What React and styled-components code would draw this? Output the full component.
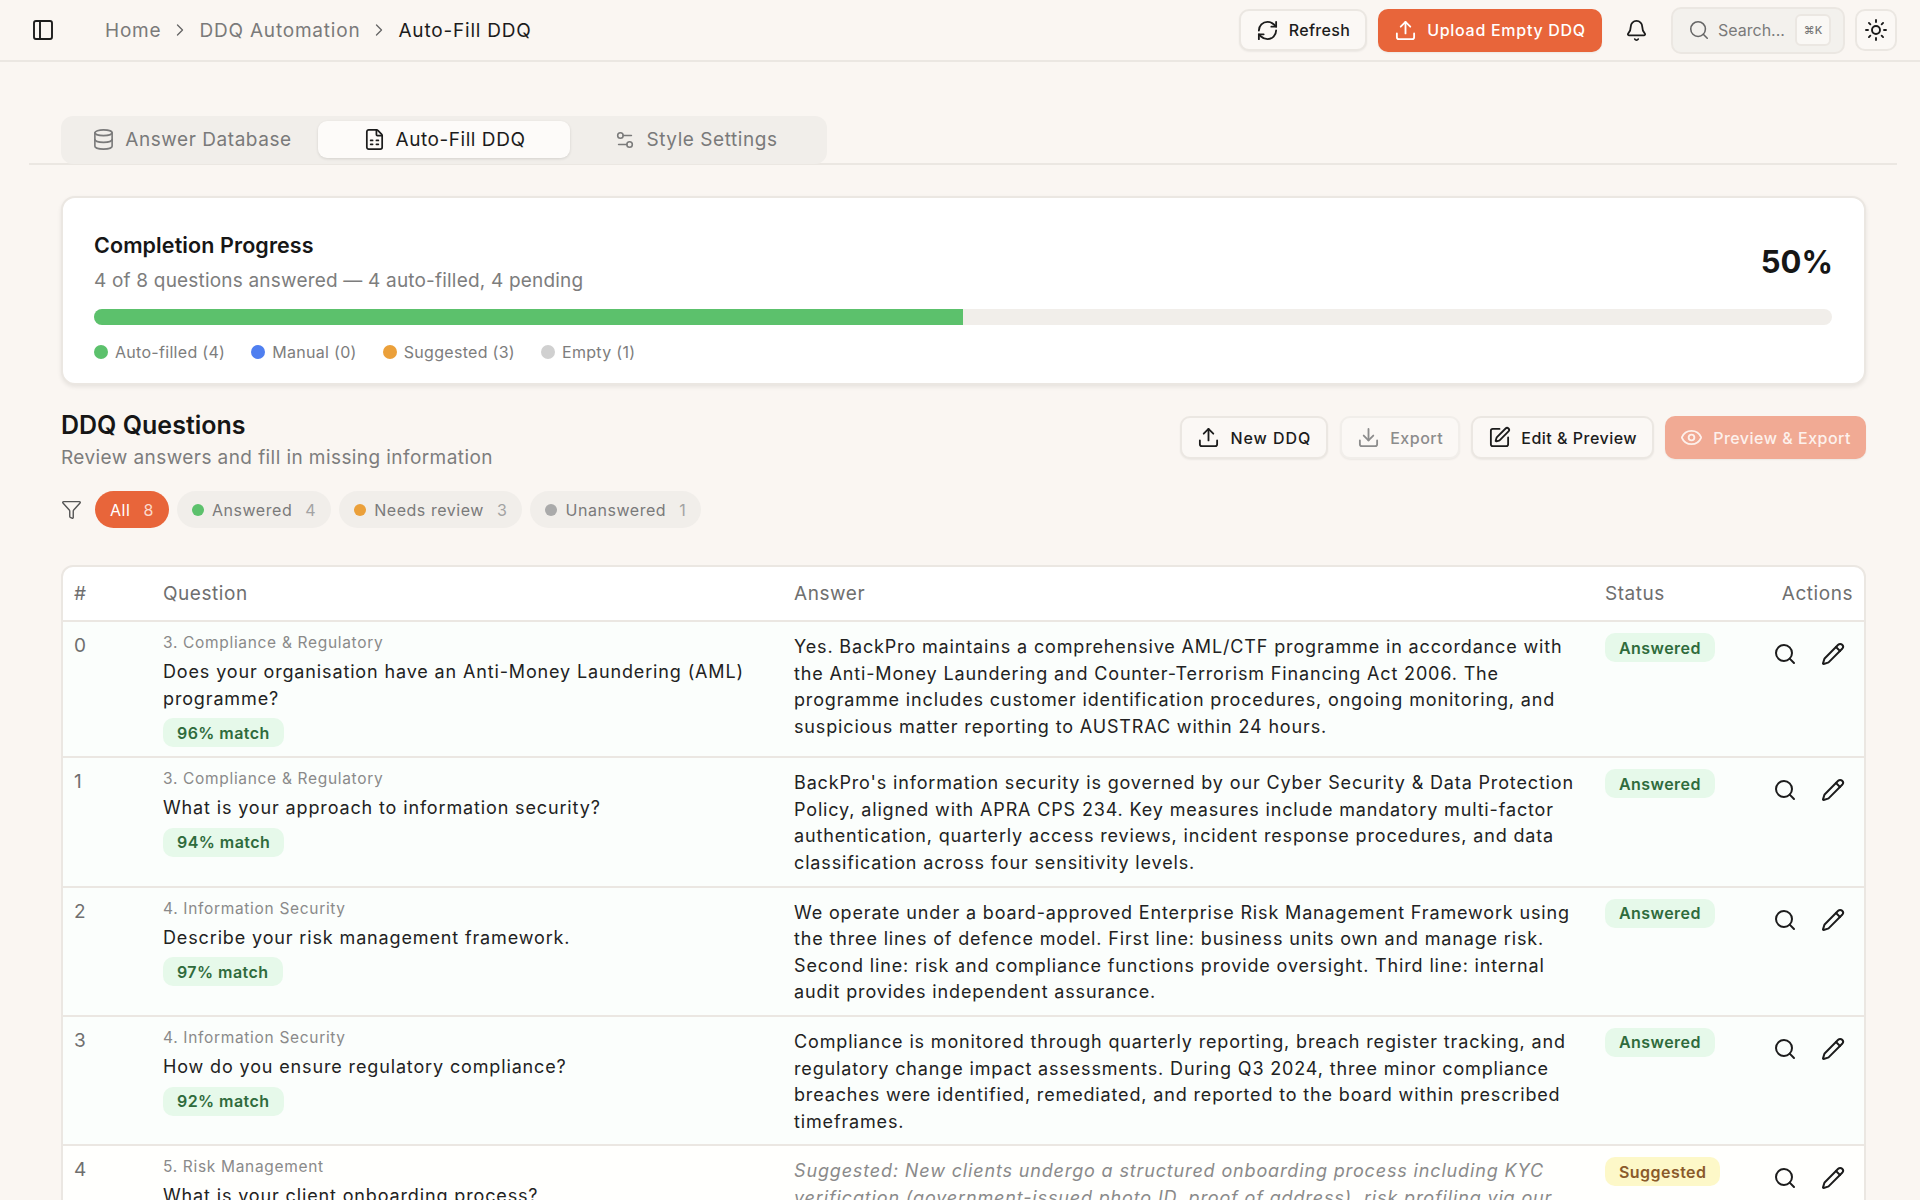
import React from "react"
import styled, { createGlobalStyle } from "styled-components"
import {
  PanelLeft,
  ChevronRight,
  RefreshCw,
  Upload,
  Bell,
  Search,
  Sun,
  Database,
  FileSpreadsheet,
  Settings2,
  Funnel,
  Download,
  SquarePen,
  Eye,
  Pencil,
} from "lucide-react"

const GlobalStyle = createGlobalStyle`
  html, body {
    margin: 0;
    height: 100%;
    overflow: hidden;
    background: #faf6f2;
    font-family: Inter, "Liberation Sans", sans-serif;
    color: #1c1c1c;
  }
  * { box-sizing: border-box; }
`

const rows = [
  {
    id: 0,
    cat: "3. Compliance & Regulatory",
    q: "Does your organisation have an Anti-Money Laundering (AML) programme?",
    match: "96% match",
    a: "Yes. BackPro maintains a comprehensive AML/CTF programme in accordance with the Anti-Money Laundering and Counter-Terrorism Financing Act 2006. The programme includes customer identification procedures, ongoing monitoring, and suspicious matter reporting to AUSTRAC within 24 hours.",
    status: "Answered",
  },
  {
    id: 1,
    cat: "3. Compliance & Regulatory",
    q: "What is your approach to information security?",
    match: "94% match",
    a: "BackPro's information security is governed by our Cyber Security & Data Protection Policy, aligned with APRA CPS 234. Key measures include mandatory multi-factor authentication, quarterly access reviews, incident response procedures, and data classification across four sensitivity levels.",
    status: "Answered",
  },
  {
    id: 2,
    cat: "4. Information Security",
    q: "Describe your risk management framework.",
    match: "97% match",
    a: "We operate under a board-approved Enterprise Risk Management Framework using the three lines of defence model. First line: business units own and manage risk. Second line: risk and compliance functions provide oversight. Third line: internal audit provides independent assurance.",
    status: "Answered",
  },
  {
    id: 3,
    cat: "4. Information Security",
    q: "How do you ensure regulatory compliance?",
    match: "92% match",
    a: "Compliance is monitored through quarterly reporting, breach register tracking, and regulatory change impact assessments. During Q3 2024, three minor compliance breaches were identified, remediated, and reported to the board within prescribed timeframes.",
    status: "Answered",
  },
  {
    id: 4,
    cat: "5. Risk Management",
    q: "What is your client onboarding process?",
    match: "78% match",
    a: "Suggested: New clients undergo a structured onboarding process including KYC verification (government-issued photo ID, proof of address), risk profiling via our standard questionnaire, and a suitability assessment before any advice is provided.",
    status: "Suggested",
  },
]

const legend = [
  { label: "Auto-filled (4)", color: "#5cc16c" },
  { label: "Manual (0)", color: "#4f7ff0" },
  { label: "Suggested (3)", color: "#eba03a" },
  { label: "Empty (1)", color: "#d0d0d0" },
]

const filters = [
  { label: "Answered", count: 4, color: "#5cc16c" },
  { label: "Needs review", count: 3, color: "#eba03a" },
  { label: "Unanswered", count: 1, color: "#aaaaaa" },
]

const App = () => {
  return (
    <Page>
      <GlobalStyle />
      <TopBar>
        <SidebarToggle>
          <PanelLeft size={24} strokeWidth={1.9} />
        </SidebarToggle>
        <Crumbs>
          <Crumb>Home</Crumb>
          <ChevronRight size={20} strokeWidth={1.6} color="#666" />
          <Crumb>DDQ Automation</Crumb>
          <ChevronRight size={20} strokeWidth={1.6} color="#666" />
          <Crumb $current>Auto-Fill DDQ</Crumb>
        </Crumbs>
        <TopActions>
          <TopButton>
            <RefreshCw size={23} strokeWidth={1.9} />
            Refresh
          </TopButton>
          <PrimaryButton>
            <Upload size={23} strokeWidth={1.9} />
            Upload Empty DDQ
          </PrimaryButton>
          <BellButton>
            <Bell size={23} strokeWidth={1.9} />
          </BellButton>
          <SearchBox>
            <Search size={22} strokeWidth={1.7} color="#666" />
            <SearchText>Search...</SearchText>
            <Kbd>⌘K</Kbd>
          </SearchBox>
          <ThemeButton>
            <Sun size={24} strokeWidth={1.9} />
          </ThemeButton>
        </TopActions>
      </TopBar>

      <Main>
        <TabRow>
          <Tabs>
            <Tab>
              <Database size={23} strokeWidth={1.7} />
              Answer Database
            </Tab>
            <Tab $active>
              <FileSpreadsheet size={23} strokeWidth={1.8} />
              Auto-Fill DDQ
            </Tab>
            <Tab>
              <Settings2 size={22} strokeWidth={1.7} />
              Style Settings
            </Tab>
          </Tabs>
        </TabRow>

        <Content>
          <ProgressCard>
            <ProgressTop>
              <div>
                <CardTitle>Completion Progress</CardTitle>
                <CardSub>4 of 8 questions answered — 4 auto-filled, 4 pending</CardSub>
              </div>
              <Percent>50%</Percent>
            </ProgressTop>
            <Track>
              <Fill style={{ width: "50%" }} />
            </Track>
            <Legend>
              {legend.map((l) => (
                <LegendItem key={l.label}>
                  <Dot $color={l.color} $size={14} />
                  {l.label}
                </LegendItem>
              ))}
            </Legend>
          </ProgressCard>

          <SectionHead>
            <div>
              <SectionTitle>DDQ Questions</SectionTitle>
              <SectionSub>Review answers and fill in missing information</SectionSub>
            </div>
            <SectionActions>
              <NewButton>
                <Upload size={23} strokeWidth={1.9} />
                New DDQ
              </NewButton>
              <OutlineButton $disabled>
                <Download size={23} strokeWidth={1.9} />
                Export
              </OutlineButton>
              <OutlineButton>
                <SquarePen size={23} strokeWidth={1.9} />
                Edit &amp; Preview
              </OutlineButton>
              <FadedButton>
                <Eye size={23} strokeWidth={1.9} />
                Preview &amp; Export
              </FadedButton>
            </SectionActions>
          </SectionHead>

          <FilterRow>
            <FilterIcon>
              <Funnel size={21} strokeWidth={1.6} />
            </FilterIcon>
            <Pill $active>
              All <PillCount $active>8</PillCount>
            </Pill>
            {filters.map((f) => (
              <Pill key={f.label}>
                <Dot $color={f.color} $size={12} />
                {f.label}
                <PillCount>{f.count}</PillCount>
              </Pill>
            ))}
          </FilterRow>

          <TableWrap>
            <Table>
              <colgroup>
                <col style={{ width: 89 }} />
                <col style={{ width: 631 }} />
                <col style={{ width: 811 }} />
                <col style={{ width: 160 }} />
                <col />
              </colgroup>
              <thead>
                <tr>
                  <Th>#</Th>
                  <Th>Question</Th>
                  <Th>Answer</Th>
                  <Th>Status</Th>
                  <Th $right>Actions</Th>
                </tr>
              </thead>
              <tbody>
                {rows.map((r) => (
                  <Row key={r.id} $suggested={r.status === "Suggested"}>
                    <NumCell>{r.id}</NumCell>
                    <Td>
                      <Category>{r.cat}</Category>
                      <Question>{r.q}</Question>
                      <MatchBadge $status="Answered">{r.match}</MatchBadge>
                    </Td>
                    <Td>
                      <Answer $suggested={r.status === "Suggested"}>{r.a}</Answer>
                    </Td>
                    <Td>
                      <Badge $status={r.status}>{r.status}</Badge>
                    </Td>
                    <Td>
                      <RowActions>
                        <Search size={24} strokeWidth={2} />
                        <Pencil size={24} strokeWidth={2} />
                      </RowActions>
                    </Td>
                  </Row>
                ))}
              </tbody>
            </Table>
          </TableWrap>
        </Content>
      </Main>
    </Page>
  )
}

const Page = styled.div`
  height: 100vh;
  overflow: hidden;
`

const TopBar = styled.header`
  display: flex;
  align-items: center;
  height: 62px;
  padding: 0 23px 0 31px;
  border-bottom: 2px solid #ebe7e2;
`

const SidebarToggle = styled.div`
  display: flex;
  width: 74px;
`

const Crumbs = styled.nav`
  display: flex;
  align-items: center;
  gap: 9px;
`

const Crumb = styled.span`
  font-size: 19px;
  letter-spacing: 0.8px;
  color: ${(p) => (p.$current ? "#1c1c1c" : "#7a7a7a")};
`

const TopActions = styled.div`
  display: flex;
  align-items: center;
  margin-left: auto;
`

const TopButton = styled.button`
  display: flex;
  align-items: center;
  justify-content: center;
  gap: 10px;
  width: 128px;
  height: 42px;
  border: 2px solid #ebe7e2;
  border-radius: 10px;
  background: #fbf8f5;
  box-shadow: 0 1px 2px rgba(0, 0, 0, 0.06);
  font: 500 16px Inter, sans-serif;
  letter-spacing: 0.35px;
  color: #1c1c1c;
`

const PrimaryButton = styled(TopButton)`
  width: 224px;
  height: 43px;
  margin-left: 11px;
  border: 0;
  background: #e8653a;
  letter-spacing: 0.72px;
  color: #fff;
`

const BellButton = styled.div`
  display: flex;
  justify-content: center;
  width: 69px;
`

const SearchBox = styled.div`
  display: flex;
  align-items: center;
  width: 174px;
  height: 47px;
  padding: 0 12px 0 15px;
  border: 2px solid #ebe7e2;
  border-radius: 10px;
  background: #f3f1ed;
`

const SearchText = styled.span`
  margin-left: 8px;
  font-size: 16px;
  color: #7a7a7a;
`

const Kbd = styled.span`
  display: flex;
  align-items: center;
  justify-content: center;
  width: 36px;
  height: 32px;
  margin-left: auto;
  border: 2px solid #ebe7e2;
  border-radius: 6px;
  background: #faf8f5;
  font-size: 11px;
  font-weight: 500;
  color: #777;
`

const ThemeButton = styled.div`
  display: flex;
  align-items: center;
  justify-content: center;
  width: 42px;
  height: 42px;
  margin-left: 10px;
  border: 2px solid #ebe7e2;
  border-radius: 10px;
  background: #fbf8f5;
`

const Main = styled.main`
  padding: 0 23px 0 29px;
`

const TabRow = styled.div`
  padding: 54px 0 0 32px;
  border-bottom: 2px solid #ebe7e2;
`

const Tabs = styled.div`
  display: flex;
  width: 766px;
  height: 48px;
  padding: 5px;
  border-radius: 12px;
  background: #f1eeea;
  margin-bottom: -1px;
`

const Tab = styled.div`
  display: flex;
  flex: 1;
  align-items: center;
  justify-content: center;
  gap: 10px;
  height: 37px;
  border-radius: 9px;
  font-size: 19px;
  letter-spacing: 0.55px;
  color: ${(p) => (p.$active ? "#1c1c1c" : "#7a7a7a")};
  background: ${(p) => (p.$active ? "#fdfbf9" : "transparent")};
  box-shadow: ${(p) => (p.$active ? "0 1px 3px rgba(0, 0, 0, 0.12)" : "none")};
`

const Content = styled.div`
  padding: 31px 31px 0 32px;
`

const ProgressCard = styled.section`
  height: 189px;
  padding: 33px 32px 0 31px;
  border: 2px solid #ebe7e2;
  border-radius: 14px;
  background: #fff;
  box-shadow: 0 2px 4px rgba(0, 0, 0, 0.08);
`

const ProgressTop = styled.div`
  display: flex;
  align-items: center;
  justify-content: space-between;
`

const CardTitle = styled.h3`
  margin: 0;
  font-size: 21.5px;
  font-weight: 600;
  line-height: 28px;
  letter-spacing: 0.1px;
  color: #161616;
`

const CardSub = styled.p`
  margin: 8px 0 0;
  font-size: 19px;
  line-height: 28px;
  letter-spacing: 0.19px;
  color: #7d7d7d;
`

const Percent = styled.div`
  margin: 0 -1px 4px 0;
  font-size: 31px;
  font-weight: 700;
  color: #161616;
`

const Track = styled.div`
  height: 16px;
  margin-top: 14px;
  border-radius: 8px;
  background: #f1eeea;
  overflow: hidden;
`

const Fill = styled.div`
  height: 100%;
  background: #5cc16c;
`

const Legend = styled.div`
  display: flex;
  gap: 26px;
  margin-top: 17px;
`

const LegendItem = styled.span`
  display: flex;
  align-items: center;
  gap: 7px;
  font-size: 16px;
  letter-spacing: 0.3px;
  color: #7d7d7d;
`

const Dot = styled.span`
  flex: none;
  width: ${(p) => p.$size}px;
  height: ${(p) => p.$size}px;
  border-radius: 50%;
  background: ${(p) => p.$color};
`

const SectionHead = styled.div`
  display: flex;
  justify-content: space-between;
  margin-top: 25px;
`

const SectionTitle = styled.h2`
  margin: 0;
  font-size: 25px;
  font-weight: 600;
  line-height: 30px;
  color: #161616;
`

const SectionSub = styled.p`
  margin: 6px 0 0;
  font-size: 19px;
  line-height: 24px;
  letter-spacing: 0.42px;
  color: #7d7d7d;
`

const SectionActions = styled.div`
  display: flex;
  gap: 11px;
  margin-top: 6px;
`

const OutlineButton = styled.button`
  display: flex;
  align-items: center;
  gap: 10px;
  height: 43px;
  padding: 0 15px;
  border: 2px solid ${(p) => (p.$disabled ? "#f1eeea" : "#ebe7e2")};
  border-radius: 10px;
  background: #fbf8f5;
  box-shadow: 0 1px 2px rgba(0, 0, 0, 0.06);
  font: 500 16px Inter, sans-serif;
  letter-spacing: 0.5px;
  color: ${(p) => (p.$disabled ? "#8c8c8c" : "#1c1c1c")};
`

const NewButton = styled(OutlineButton)`
  margin-right: 1px;
  letter-spacing: 0.95px;
`

const FadedButton = styled(OutlineButton)`
  border: 0;
  background: #f1aa94;
  color: #fdf1ec;
`

const FilterRow = styled.div`
  display: flex;
  align-items: center;
  gap: 8px;
  margin-top: 21px;
`

const FilterIcon = styled.span`
  display: flex;
  margin-right: 5px;
  color: #555;
`

const Pill = styled.span`
  display: flex;
  align-items: center;
  gap: 8px;
  height: 37px;
  padding: 0 15px;
  border-radius: 19px;
  font-size: 16px;
  letter-spacing: 0.55px;
  background: ${(p) => (p.$active ? "#e8653a" : "#f1eeea")};
  color: ${(p) => (p.$active ? "#fff" : "#7a7a7a")};
`

const PillCount = styled.span`
  margin-left: 5px;
  color: ${(p) => (p.$active ? "#fbd9cc" : "#a3a3a3")};
`

const TableWrap = styled.div`
  margin-top: 37px;
  border: 2px solid #ebe7e2;
  border-radius: 12px 12px 0 0;
  background: #fff;
  overflow: hidden;
`

const Table = styled.table`
  width: 100%;
  table-layout: fixed;
  border-collapse: collapse;
`

const Th = styled.th`
  height: 54px;
  padding: 0 11px;
  border-bottom: 2px solid #ebe7e2;
  font-size: 19px;
  font-weight: 400;
  letter-spacing: 0.55px;
  text-align: ${(p) => (p.$right ? "right" : "left")};
  color: #6f6f6f;
`

const Row = styled.tr`
  background: ${(p) => (p.$suggested ? "#fffffd" : "#fbfefc")};
  border-bottom: 2px solid #ebe7e2;
`

const Td = styled.td`
  padding: 11px 11px 9px;
  vertical-align: top;
`

const NumCell = styled(Td)`
  font-size: 19px;
  line-height: 26px;
  color: #6f6f6f;
`

const Category = styled.div`
  font-size: 15.5px;
  line-height: 20px;
  letter-spacing: 0.68px;
  color: #8a8a8a;
`

const Question = styled.div`
  margin-top: 6px;
  font-size: 18px;
  line-height: 26.6px;
  letter-spacing: 0.86px;
  color: #222;
`

const Badge = styled.div`
  display: flex;
  align-items: center;
  width: fit-content;
  height: 29px;
  padding: 0 14px;
  border-radius: 10px;
  font-size: 16px;
  font-weight: 600;
  letter-spacing: 0.45px;
  background: ${(p) => (p.$status === "Suggested" ? "#fdf8c8" : "#e6f9ea")};
  color: ${(p) => (p.$status === "Suggested" ? "#8a5a2a" : "#2f6b3c")};
`

const MatchBadge = styled(Badge)`
  margin-top: 6px;
`

const Answer = styled.div`
  margin-top: 1px;
  font-size: 18px;
  line-height: 26.6px;
  letter-spacing: 0.85px;
  font-style: ${(p) => (p.$suggested ? "italic" : "normal")};
  color: ${(p) => (p.$suggested ? "#8a8a8a" : "#222")};
`

const RowActions = styled.div`
  display: flex;
  justify-content: flex-end;
  gap: 24px;
  padding: 9px 8px 0 0;
  color: #1c1c1c;
`

export default App
